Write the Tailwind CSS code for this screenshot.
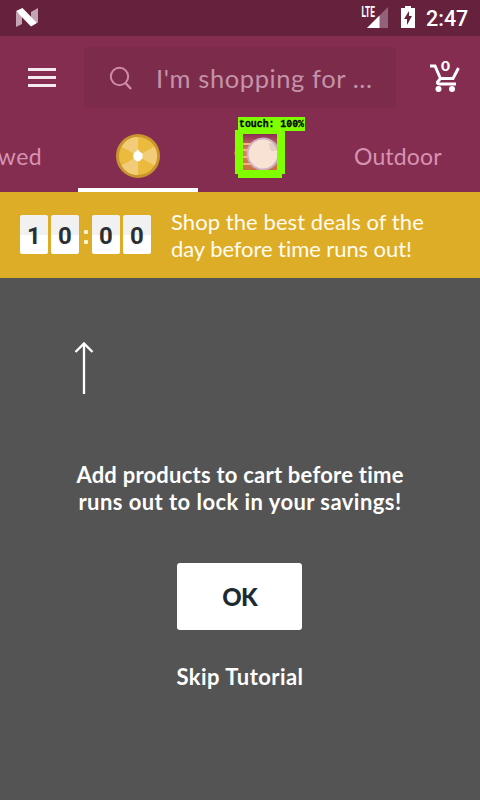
<!DOCTYPE html>
<html lang="en">
<head>
<meta charset="utf-8">
<title>Deals</title>
<script src="https://cdn.jsdelivr.net/npm/@tailwindcss/browser@4"></script>
</head>
<body class="w-[480px] h-[800px] overflow-hidden bg-[#545454] font-['Lato',sans-serif] [font-variant-ligatures:none] flex flex-col">
<div class="h-9 shrink-0 bg-[#66213d] flex items-center justify-between pl-4 pr-[11px]">
  <svg class="w-[22px] h-[20px]" viewBox="0 0 22 20"><path d="M0 4L6 7V16L0 19Z" fill="#c4a4b4"/><path d="M15 4L22 0V15L15 12Z" fill="#c4a4b4"/><path d="M0 3L6.500 0L21 15L15 18.500Z" fill="#fff"/></svg>
  <div class="flex items-center">
    <svg class="w-[56px] h-9" viewBox="0 0 56 36"><path d="M28 7V28H7Z" fill="#94617a"/><path d="M19.500 15.500V28H7Z" fill="#fff"/><path d="M0 5H15.500V18H0Z" fill="#66213d"/><text x="1.500" y="17" font-family="Roboto" font-weight="700" font-size="14" textLength="13.500" lengthAdjust="spacingAndGlyphs" fill="#fff">LTE</text><path d="M41 8H45V6H51V8H55V28H41Z" fill="#fff"/><path d="M49 11V16H52L47 25V19H44Z" fill="#66213d"/></svg>
    <div class="font-['Roboto',sans-serif] font-medium text-[21.500px] leading-9 text-white ml-[10px] w-[43px] whitespace-nowrap pt-[2px]">2:47</div>
  </div>
</div>
<header class="h-[84px] shrink-0 bg-[#842d50] flex items-start pt-[11px]">
  <svg class="w-7 h-[60px] ml-7" viewBox="0 0 28 60"><path d="M0 22.500H28M0 30.500H28M0 38.500H28" stroke="#f5e8ee" stroke-width="3"/></svg>
  <div class="w-[312px] h-[61px] ml-7 bg-[#7c2b4a] rounded-sm flex items-center">
    <svg class="w-6 h-6 ml-[25px]" viewBox="0 0 24 24" fill="none" stroke="#d08aab" stroke-width="2"><circle cx="10.500" cy="10.500" r="8.700"/><path d="M16.500 17L22 23" stroke-width="2.500"/></svg>
    <span class="ml-[23px] text-[25.500px] text-[#c493aa] whitespace-nowrap pt-[2px] tracking-[0.6px]">I'm shopping for ...</span>
  </div>
  <svg class="w-[32px] h-[60px] ml-[33px]" viewBox="0 0 32 60" fill="none"><path d="M1 19H6L11.500 31.500H24L29.500 21M11.500 31.500L8.500 35Q8 37 11 37H27" stroke="#fff" stroke-width="2.900"/><circle cx="9.500" cy="42" r="3" fill="#fff"/><circle cx="23" cy="42" r="3" fill="#fff"/><text x="16.500" y="24" text-anchor="middle" font-family="Lato" font-weight="900" font-size="14" textLength="9" lengthAdjust="spacingAndGlyphs" fill="#fff">0</text></svg>
</header>
<nav class="h-[72px] shrink-0 bg-[#842d50] flex relative text-[#d792b2] text-[23px]">
  <div class="w-[78px] flex justify-end pr-[36px] items-center pt-px tracking-[0.4px]"><span>wed</span></div>
  <div class="w-[120px] border-b-4 border-white flex justify-center pt-[14px]">
    <svg class="w-11 h-11" viewBox="0 0 44 44"><circle cx="22" cy="22" r="22" fill="#c9952d"/><circle cx="22" cy="22" r="19" fill="#ebbb40"/><g fill="#f2cc78"><path d="M22 22V3A19 19 0 0 0 5.550 12.500Z"/><path d="M22 22L38.450 12.500A19 19 0 0 1 38.450 31.500Z"/><path d="M22 22L5.550 31.500A19 19 0 0 0 22 41Z"/></g><path d="M22 15.500L24 18L26.500 19.500V24L24 27L21 27.500L18 25L17 22L18 19Z" fill="#fff"/></svg>
  </div>
  <div class="w-[120px]"></div>
  <div class="w-[162px] flex justify-start pl-[36px] items-center pt-px"><span class="tracking-[0.15px]">Outdoor</span></div>
  <svg class="absolute left-[232px] top-[-4px] w-[75px] h-[64px]" viewBox="0 0 75 64">
    <defs><clipPath id="cut"><rect x="11" y="18" width="34" height="36"/></clipPath><linearGradient id="tint" x2="0" y2="1"><stop stop-color="#8c2b57"/><stop offset=".45" stop-color="#d9845f"/><stop offset="1" stop-color="#c9703f"/></linearGradient></defs>
    <path d="M2 37H5" stroke="#b8663f" stroke-width="3"/>
    <rect x="3" y="14" width="50" height="44" fill="#80ff00"/><rect x="6" y="54" width="44" height="8" fill="#80ff00"/><rect x="6" y="1" width="67" height="14" fill="#80ff00"/>
    <g clip-path="url(#cut)"><rect x="11" y="18" width="34" height="36" fill="url(#tint)"/><path d="M11 28H20M11 34H20M11 41H20M11 48H28" stroke="#f4b47e" stroke-width="2"/><circle cx="31" cy="38" r="15.500" fill="#f7e2d4" stroke="#cbb0c4" stroke-width="2"/><path d="M37 27L45 28V34Q40 37 38 33Z" fill="#c9a4a9" opacity=".35"/></g>
    <text x="7" y="11" font-family="Liberation Mono" font-weight="700" font-size="11.500" textLength="65" lengthAdjust="spacingAndGlyphs" fill="#000" stroke="#000" stroke-width=".3">touch: 100%</text>
  </svg>
</nav>
<section class="h-[86px] shrink-0 bg-[#dead27] flex items-center px-5">
  <div class="flex gap-[3px] mb-[2px] font-['Roboto',sans-serif] font-bold text-[24px] leading-[39px] text-center text-[#2b2f31]">
    <span class="w-7 h-[39px] rounded-[2px] bg-[linear-gradient(#f1f1f1_50%,#fff_50%)] pt-[2px]">1</span>
    <span class="w-7 h-[39px] rounded-[2px] bg-[linear-gradient(#f1f1f1_50%,#fff_50%)] pt-[2px]">0</span>
    <span class="w-[7px] flex flex-col items-center justify-center gap-[6px] pt-[6px]"><i class="w-1 h-1 bg-[#fff5d6] rounded-[1px]"></i><i class="w-1 h-1 bg-[#fff5d6] rounded-[1px]"></i></span>
    <span class="w-7 h-[39px] rounded-[2px] bg-[linear-gradient(#f1f1f1_50%,#fff_50%)] pt-[2px]">0</span>
    <span class="w-7 h-[39px] rounded-[2px] bg-[linear-gradient(#f1f1f1_50%,#fff_50%)] pt-[2px]">0</span>
  </div>
  <div class="ml-5 text-[22px] leading-[27px] text-[#fffcef] whitespace-nowrap"><div class="tracking-[0.07px]">Shop the best deals of the</div><div class="tracking-[-0.07px]">day before time runs out!</div></div>
</section>
<main class="grow flex flex-col items-center text-white font-bold text-[22px]">
  <svg class="w-5 h-[54px] mt-[63px] self-start ml-[74px] shrink-0" viewBox="0 0 20 54" fill="none" stroke="#fff" stroke-width="2.300"><path d="M10 53V3M1.500 11L10 2.500L18.500 11"/></svg>
  <div class="mt-[66px] leading-[27px] text-center whitespace-nowrap"><div class="tracking-[0.23px]">Add products to cart before time</div><div class="tracking-[0.45px]">runs out to lock in your savings!</div></div>
  <div class="mt-[48px] mr-px w-[125px] h-[67px] shrink-0 rounded-[3px] bg-white text-[#1b2a33] text-[24px] flex items-center justify-center font-black pt-px tracking-[-0.8px]">OK</div>
  <div class="mt-[33px] leading-[27px] tracking-[0.45px]">Skip Tutorial</div>
</main>
</body>
</html>
